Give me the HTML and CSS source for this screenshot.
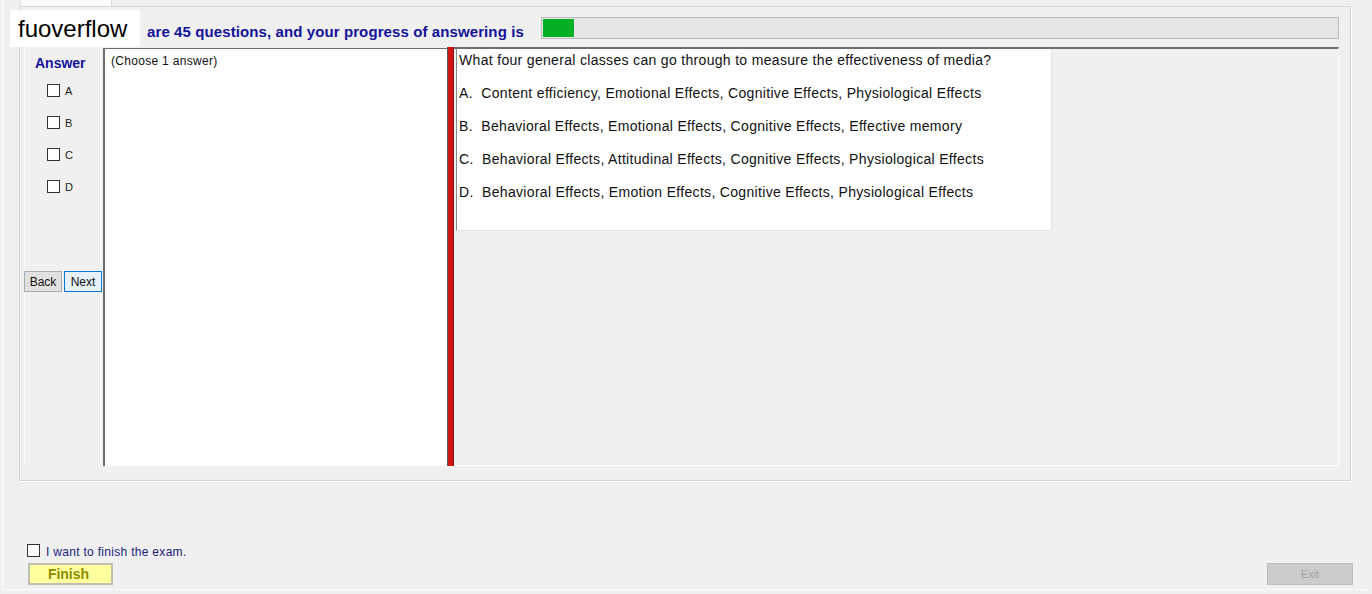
FILE: index.html
```html
<!DOCTYPE html>
<html>
<head>
<meta charset="utf-8">
<link rel="stylesheet" href="styles.css">
</head>
<body>
<div class="window">
  <div class="tabs"><div class="tab"></div></div>
  <div class="group">
    <div class="header">
      <div class="progress-label">are 45 questions, and your progress of answering is</div>
      <div class="progress"><div class="progress-fill" style="width:31px"></div></div>
    </div>
    <div class="main">
      <div class="answer-col">
        <div class="answer-title">Answer</div>
        <label class="opt"><span class="box"></span><span>A</span></label>
        <label class="opt"><span class="box"></span><span>B</span></label>
        <label class="opt"><span class="box"></span><span>C</span></label>
        <label class="opt"><span class="box"></span><span>D</span></label>
        <div class="nav">
          <button class="btn back">Back</button>
          <button class="btn next">Next</button>
        </div>
      </div>
      <div class="left-panel">
        <div class="hint">(Choose 1 answer)</div>
      </div>
      <div class="splitter"></div>
      <div class="right-panel">
        <div class="question">
          <p class="q">What four general classes can go through to measure the effectiveness of media?</p>
          <p class="q">A.  Content efficiency, Emotional Effects, Cognitive Effects, Physiological Effects</p>
          <p class="q">B.  Behavioral Effects, Emotional Effects, Cognitive Effects, Effective memory</p>
          <p class="q">C.  Behavioral Effects, Attitudinal Effects, Cognitive Effects, Physiological Effects</p>
          <p class="q">D.  Behavioral Effects, Emotion Effects, Cognitive Effects, Physiological Effects</p>
        </div>
      </div>
    </div>
  </div>
  <div class="footer">
    <label class="finish-check"><span class="box"></span><span class="finish-text">I want to finish the exam.</span></label>
    <div class="footer-buttons">
      <button class="finish">Finish</button>
      <button class="exit">Exit</button>
    </div>
  </div>
  <div class="watermark">fuoverflow</div>
</div>
</body>
</html>
```

FILE: styles.css
```css
html, body {
  margin: 0;
  padding: 0;
}
body {
  background: #f0f0f0;
  font-family: "Liberation Sans", Arial, sans-serif;
  width: 1372px;
  height: 594px;
  overflow: hidden;
}
.window {
  position: relative;
  height: 590px;
  box-sizing: border-box;
  border-left: 1px solid #fbfbfb;
  border-bottom: 1px solid #fbfbfb;
  margin-left: 2px;
  width: 1368px;
}
.tabs {
  height: 6px;
  display: flex;
}
.tab {
  margin-left: 17px;
  width: 90px;
  height: 6px;
  background: #fdfdfd;
  border-left: 1px solid #d9d9d9;
  border-right: 1px solid #d9d9d9;
}
.group {
  margin-left: 16px;
  width: 1332px;
  height: 475px;
  box-sizing: border-box;
  border: 1px solid #d6d6d6;
  box-shadow: 1px 1px 0 #ffffff;
  padding: 0 11px 14px 4px;
  display: flex;
  flex-direction: column;
}
.header {
  height: 40px;
  display: flex;
  align-items: flex-end;
  padding-bottom: 8px;
  box-sizing: border-box;
}
.progress-label {
  margin-left: 123px;
  font-weight: bold;
  font-size: 15px;
  letter-spacing: 0.1px;
  line-height: 17px;
  color: #12129a;
  position: relative;
  top: 1px;
}
.progress {
  margin-left: auto;
  width: 798px;
  height: 22px;
  box-sizing: border-box;
  border: 1px solid #bcbcbc;
  background: #e6e6e6;
  padding: 1px;
  display: flex;
}
.progress-fill {
  height: 100%;
  background: #06b025;
}
.main {
  height: 419px;
  display: flex;
}
.answer-col {
  width: 79px;
  display: flex;
  flex-direction: column;
  border-left: 1px solid #fafafa;
  box-sizing: border-box;
}
.answer-title {
  margin-top: 8px;
  padding-left: 10px;
  font-weight: bold;
  font-size: 14px;
  line-height: 16px;
  color: #12129a;
}
.opt {
  display: flex;
  align-items: center;
  margin-left: 22px;
  height: 15px;
  font-size: 11px;
  color: #222;
  gap: 5px;
  margin-top: 17px;
}
.answer-title + .opt {
  margin-top: 12px;
}
.box {
  width: 13px;
  height: 13px;
  box-sizing: border-box;
  border: 1px solid #333;
  background: #fff;
  display: inline-block;
  flex: none;
}
.nav {
  margin-top: 77px;
  display: flex;
  gap: 2px;
}
.btn {
  width: 38px;
  height: 21px;
  box-sizing: border-box;
  padding: 0;
  font-family: "Liberation Sans", Arial, sans-serif;
  font-size: 12px;
  color: #111;
  border: 1px solid #adadad;
  background: #e1e1e1;
  margin: 0;
}
.btn.back {
  margin-left: -1px;
}
.btn.next {
  background: #e5f1fb;
  border-color: #0078d7;
}
.left-panel {
  width: 344px;
  background: #fff;
  box-sizing: border-box;
  border-left: 2px solid #6e6e6e;
  border-top: 1px solid #6e6e6e;
  margin-top: 1px;
  padding: 5px 0 0 6px;
}
.hint {
  font-size: 12px;
  letter-spacing: 0.3px;
  line-height: 15px;
  color: #111;
}
.splitter {
  width: 7px;
  box-sizing: border-box;
  background: #d11414;
  border-left: 1px solid #5a5a5a;
  border-right: 1px solid #8a1010;
}
.right-panel {
  flex: 1;
  box-sizing: border-box;
  border-top: 2px solid #6e6e6e;
  border-right: 1px solid #fbfbfb;
  border-bottom: 1px solid #fbfbfb;
  padding-left: 2px;
}
.question {
  width: 596px;
  height: 182px;
  box-sizing: border-box;
  background: #fff;
  border: 1px solid #e3e3e3;
  border-top: none;
  border-left: 1px solid #8a8a8a;
  padding: 3px 0 0 2px;
}
.q {
  margin: 0 0 16px 0;
  font-size: 14px;
  letter-spacing: 0.32px;
  line-height: 17px;
  color: #111;
  white-space: pre;
}
.footer {
  margin-top: 62px;
  display: flex;
  flex-direction: column;
}
.finish-check {
  display: flex;
  align-items: center;
  margin-left: 24px;
  height: 14px;
  gap: 6px;
  font-size: 12px;
  letter-spacing: 0.3px;
  color: #22227a;
}
.finish-text {
  position: relative;
  top: 2px;
}
.footer-buttons {
  margin-top: 6px;
  display: flex;
  justify-content: space-between;
  padding: 0 17px 0 25px;
}
.finish {
  width: 85px;
  height: 22px;
  box-sizing: border-box;
  background: #ffff9e;
  border: 2px solid #c0c0b0;
  font-family: "Liberation Sans", Arial, sans-serif;
  font-weight: bold;
  font-size: 14px;
  color: #8c8c00;
  padding: 0 4px 0 0;
}
.exit {
  width: 86px;
  height: 22px;
  box-sizing: border-box;
  background: #cccccc;
  border: 1px solid #bdbdbd;
  font-family: "Liberation Sans", Arial, sans-serif;
  font-size: 11px;
  color: #a3a3a3;
  padding: 0;
}
.watermark {
  position: absolute;
  left: 7px;
  top: 10px;
  width: 130px;
  height: 37px;
  background: #fff;
  font-size: 24px;
  line-height: 37px;
  padding-left: 8px;
  box-sizing: border-box;
  color: #000;
}
```
